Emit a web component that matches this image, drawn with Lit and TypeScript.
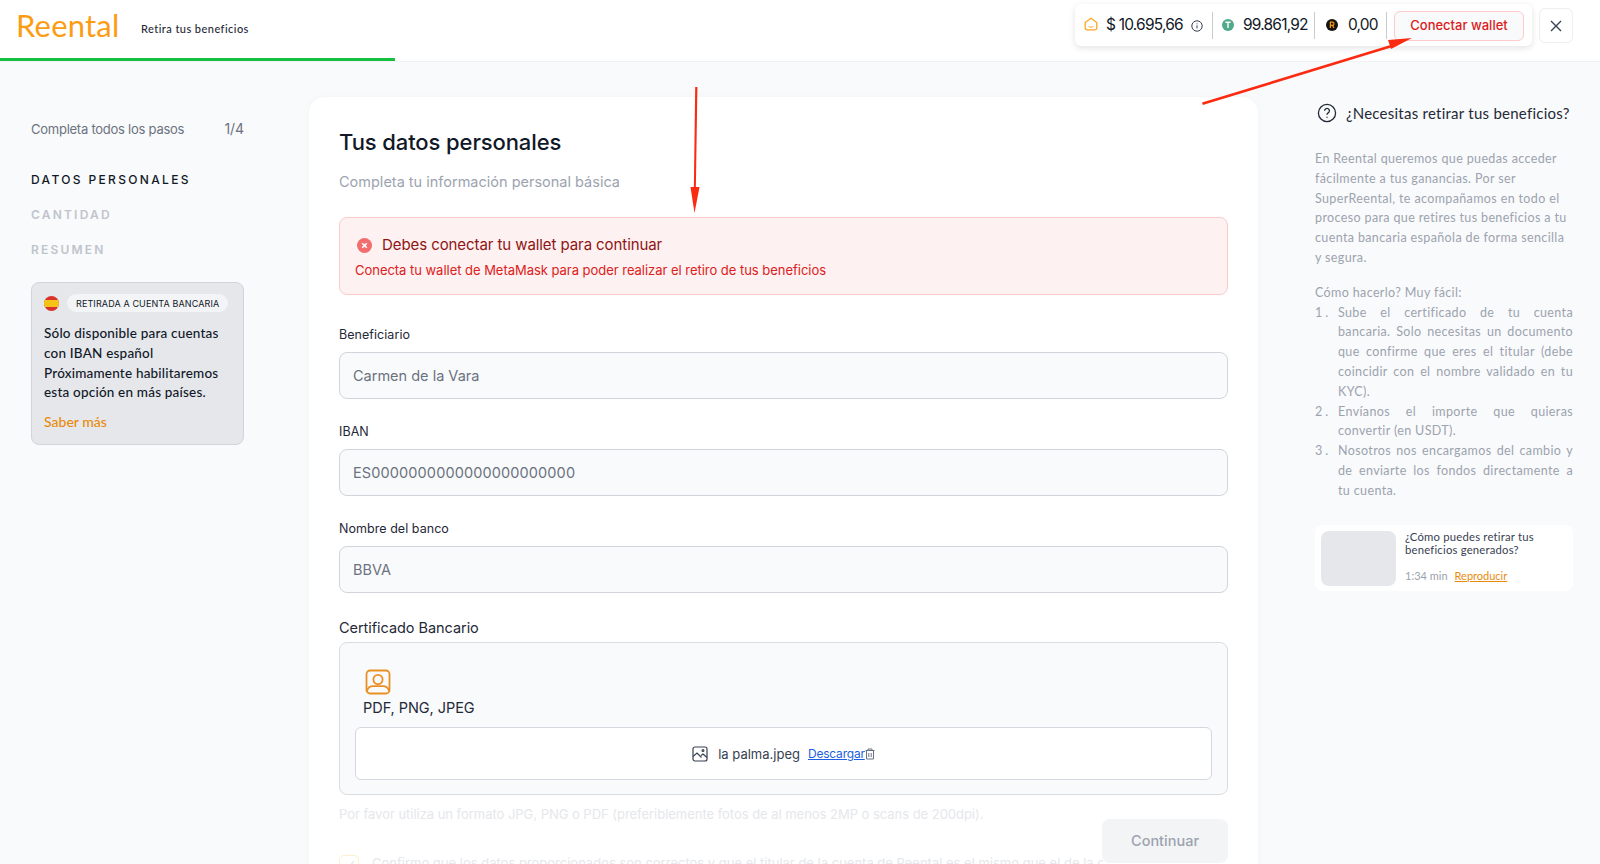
import { LitElement, html, css } from "lit";
import { customElement } from "lit/decorators.js";

@customElement("app-root")
export class AppRoot extends LitElement {
  static styles = css`
    :host { display: block; position: relative; width: 1600px; height: 864px; overflow: hidden; background: #f9fafb; font-family: Inter, "Liberation Sans", sans-serif; color: #111827; }
    * { box-sizing: border-box; }
    header { position: relative; height: 62px; background: #fff; border-bottom: 1px solid #f0f1f3; display: flex; align-items: flex-start; padding: 0 27px 0 16px; }
    .logo { font-family: Lato, sans-serif; font-size: 31px; font-weight: 400; color: #fb9d14; line-height: 36px; margin-top: 7px; width: 125px; letter-spacing: 0.2px; }
    .sub { font-family: Lato, sans-serif; font-size: 11px; font-weight: 500; color: #1f2937; letter-spacing: 0.45px; margin-top: 22px; line-height: 14px; }
    .progress { position: absolute; left: 0; bottom: 0; width: 395px; height: 3px; background: #16bf3f; }
    .spacer { flex: 1; }
    .wallet { display: flex; align-items: center; height: 42px; width: 457px; margin-top: 4px; padding: 0 8px 0 9px; background: #fff; border-radius: 6px; box-shadow: 0 2px 6px rgba(17,24,39,.12); font-size: 15.5px; letter-spacing: -0.8px; white-space: nowrap; }
    .seg { display: flex; align-items: center; height: 27px; }
    .seg span { padding-bottom: 2px; }
    .seg.a { width: 129px; border-right: 1px solid #c9ccd1; gap: 8px; }
    .seg.a .house { margin-bottom: 2px; }
    .seg.a .inf { margin-top: 2px; }
    .seg.b { width: 102px; border-right: 1px solid #c9ccd1; padding-left: 9px; gap: 9px; }
    .seg.c { width: 72px; border-right: 1px solid #c9ccd1; padding-left: 11px; gap: 10px; }
    .seg svg { flex: none; }
    .conn { margin-left: 7px; margin-top: 2px; width: 130px; height: 30px; border: 1px solid #fecaca; border-radius: 6px; background: #f9fafb; color: #d91c1c; font-size: 13px; font-weight: 500; letter-spacing: 0; display: flex; align-items: center; justify-content: center; padding-bottom: 2px; }
    .close { width: 34px; height: 35px; margin-top: 8px; margin-left: 7px; border: 1px solid #eceef1; border-radius: 6px; display: flex; align-items: center; justify-content: center; background: #fff; }
    main { display: grid; grid-template-columns: 213px 949px 258px; column-gap: 65px; padding: 35px 0 0 31px; }
    main > .right { margin-left: -8px; width: 258px; }
    .prog { display: flex; justify-content: space-between; font-size: 13px; letter-spacing: -0.25px; color: #6b7280; margin-top: 23px; line-height: 18px; }
    .prog span + span { font-size: 14px; letter-spacing: -0.1px; }
    .step { font-size: 12px; letter-spacing: 2.2px; font-weight: 600; color: #bfc4cc; line-height: 16px; margin-top: 19px; }
    .step.on { color: #111827; font-weight: 500; margin-top: 34px; letter-spacing: 2.35px; }
    .info { margin-top: 24px; height: 163px; background: #e5e7eb; border: 1px solid #d1d5db; border-radius: 8px; padding: 11px 12px; }
    .tagrow { display: flex; align-items: center; gap: 8px; }
    .tag { font-size: 9px; font-weight: 400; background: #f3f4f6; border-radius: 9px; height: 18px; padding: 0 9px; display: flex; align-items: center; white-space: nowrap; letter-spacing: 0.12px; color: #111827; }
    .info p { margin: 12px 0 0; font-family: Lato, sans-serif; font-size: 13.5px; line-height: 19.8px; color: #111827; font-weight: 500; letter-spacing: 0.2px; white-space: nowrap; }
    .info a { display: block; margin-top: 10px; font-family: Lato, sans-serif; font-size: 14px; color: #ea8a0c; font-weight: 500; line-height: 18px; }
    .card { background: #fff; border-radius: 16px 16px 0 0; padding: 0 30px; height: 800px; box-shadow: 0 0 8px rgba(17,24,39,.03); }
    h1 { margin: 30px 0 0; font-size: 22px; font-weight: 500; line-height: 30px; letter-spacing: -0.1px; color: #111827; }
    .lead { margin: 15px 0 0; font-size: 14.5px; color: #9ca3af; line-height: 20px; letter-spacing: 0; }
    .alert { margin-top: 25px; height: 78px; background: #fef1f1; border: 1px solid #fecaca; border-radius: 8px; padding: 17px 15px; }
    .at { display: flex; align-items: center; gap: 10px; font-size: 15px; line-height: 20px; color: #8f1414; padding-left: 2px; letter-spacing: -0.08px; }
    .ad { font-size: 13px; color: #dc2020; line-height: 18px; margin-top: 6px; letter-spacing: -0.03px; }
    label { display: block; font-size: 12.5px; line-height: 16px; color: #1f2937; margin-top: 25px; margin-bottom: 9px; letter-spacing: 0.05px; }
    label.first { margin-top: 32px; margin-bottom: 9px; }
    .input { height: 47px; background: #f9fafb; border: 1px solid #d1d5db; border-radius: 8px; display: flex; align-items: center; padding: 0 13px 1px; font-size: 14.5px; color: #6b7280; letter-spacing: 0; }
    .input.num { letter-spacing: 0.12px; }
    .certl { font-size: 14.5px; line-height: 20px; color: #1f2937; margin-top: 25px; letter-spacing: -0.05px; }
    .box { margin-top: 4px; height: 153px; background: #f9fafb; border: 1px solid #d9dce1; border-radius: 8px; padding: 26px 15px 0; }
    .box svg.u { display: block; margin-left: 10px; }
    .fmt { font-size: 14.5px; line-height: 20px; margin: 3px 0 0 8px; color: #1f2937; letter-spacing: -0.05px; }
    .file { margin-top: 9px; height: 53px; background: #fff; border: 1px solid #d5d8de; border-radius: 6px; display: flex; align-items: center; justify-content: center; font-size: 13px; color: #374151; }
    .file svg.i { margin-right: 10px; }
    .file a { margin-left: 8px; font-size: 12px; color: #1d5fe0; text-decoration: underline; letter-spacing: -0.2px; }
    .hint { margin-top: 11px; font-size: 13px; line-height: 16px; color: #e5e7eb; letter-spacing: -0.03px; }
    .foot { position: relative; height: 60px; }
    .btn { position: absolute; right: 0; top: -3px; width: 126px; height: 44px; padding-bottom: 2px; background: #f3f4f6; border-radius: 8px; display: flex; align-items: center; justify-content: center; color: #9ca3af; font-size: 14.5px; font-weight: 500; }
    .check { position: absolute; left: 0; top: 33px; display: flex; gap: 13px; align-items: flex-start; font-size: 13px; color: #e5e7eb; white-space: nowrap; width: 764px; overflow: hidden; line-height: 16px; }
    .cb { flex: none; width: 20px; height: 20px; border: 1px solid #fdf0cf; border-radius: 5px; display: flex; align-items: center; justify-content: center; }
    .rh { display: flex; align-items: center; gap: 9px; margin-top: 6px; font-family: Lato, sans-serif; font-size: 15px; line-height: 20px; color: #1f2937; letter-spacing: .25px; padding-left: 2px; }
    .rtext { font-family: Lato, sans-serif; font-size: 12.5px; color: #9ca3af; line-height: 19.8px; letter-spacing: 0.37px; }
    .rtext p { margin: 0; }
    .rtext p.p1 { margin-top: 26px; }
    .rtext p.p2 { margin-top: 15px; }
    ol { list-style: none; margin: 0; padding: 0; }
    li { display: flex; }
    li b { font-weight: 400; width: 23px; flex: none; letter-spacing: 3px; }
    li span { text-align: justify; }
    .video { margin-top: 24px; width: 258px; height: 66px; background: #fff; border-radius: 8px; padding: 6px; display: flex; gap: 9px; }
    .thumb { width: 75px; height: 55px; background: #e5e7eb; border-radius: 8px; flex: none; }
    .vt { font-family: Lato, sans-serif; font-size: 11.3px; line-height: 13px; color: #374151; letter-spacing: .2px; margin-top: -1px; }
    .vm { font-family: Lato, sans-serif; font-size: 11px; color: #9ca3af; margin-top: 13px; display: flex; gap: 7px; line-height: 13px; }
    .vm a { color: #ea8a0c; text-decoration: underline; }
    .arrows { position: absolute; inset: 0; width: 1600px; height: 864px; pointer-events: none; }
  `;

  render() {
    return html`
      <header>
        <div class="logo">Reental</div>
        <div class="sub">Retira tus beneficios</div>
        <div class="spacer"></div>
        <div class="wallet">
          <div class="seg a">
            <svg class="house" width="14" height="14" viewBox="0 0 14 14" fill="none" stroke="#fba61f" stroke-width="1.3"><path d="M1.2 5.6 7 1.2l5.8 4.4V11a1.8 1.8 0 0 1-1.8 1.8H3A1.8 1.8 0 0 1 1.2 11z"/><path d="M4.6 9.4c1.4 1 3.4 1 4.8 0" stroke-width="1"/></svg>
            <span>$ 10.695,66</span>
            <svg class="inf" width="12" height="12" viewBox="0 0 12 12" fill="none" stroke="#374151" stroke-width="1"><circle cx="6" cy="6" r="5.2"/><path d="M6 5.4v3M6 3.4v.9"/></svg>
          </div>
          <div class="seg b">
            <svg width="12" height="12" viewBox="0 0 12 12"><circle cx="6" cy="6" r="6" fill="#4fa98a"/><path d="M3.4 3.3h5.2M6 3.3V9" stroke="#fff" stroke-width="1.4" fill="none"/></svg>
            <span>99.861,92</span>
          </div>
          <div class="seg c">
            <svg width="12" height="12" viewBox="0 0 12 12"><circle cx="6" cy="6" r="6" fill="#161310"/><path d="M4.4 9V3.2h2a1.6 1.6 0 0 1 0 3.2h-2M6.4 6.4 8 9" stroke="#f59e0b" stroke-width="1.2" fill="none"/></svg>
            <span>0,00</span>
          </div>
          <div class="conn">Conectar wallet</div>
        </div>
        <div class="close">
          <svg width="12" height="12" viewBox="0 0 12 12" stroke="#374151" stroke-width="1.4" fill="none"><path d="M1 1l10 10M11 1 1 11"/></svg>
        </div>
        <div class="progress"></div>
      </header>
      <main>
        <aside>
          <div class="prog"><span>Completa todos los pasos</span><span>1/4</span></div>
          <div class="step on">DATOS PERSONALES</div>
          <div class="step">CANTIDAD</div>
          <div class="step">RESUMEN</div>
          <div class="info">
            <div class="tagrow">
              <svg width="15" height="15" viewBox="0 0 15 15"><defs><clipPath id="f"><circle cx="7.5" cy="7.5" r="7.5"/></clipPath></defs><g clip-path="url(#f)"><rect width="15" height="15" fill="#d9322b"/><rect y="4" width="15" height="7" fill="#f6c416"/></g></svg>
              <div class="tag">RETIRADA A CUENTA BANCARIA</div>
            </div>
            <p>Sólo disponible para cuentas<br />con IBAN español<br />Próximamente habilitaremos<br />esta opción en más países.</p>
            <a>Saber más</a>
          </div>
        </aside>
        <section class="card">
          <h1>Tus datos personales</h1>
          <p class="lead">Completa tu información personal básica</p>
          <div class="alert">
            <div class="at">
              <svg width="15" height="15" viewBox="0 0 15 15"><circle cx="7.5" cy="7.5" r="7.5" fill="#f26d6d"/><path d="M5.2 5.2l4.6 4.6M9.8 5.2l-4.6 4.6" stroke="#fff" stroke-width="1.6"/></svg>
              <span>Debes conectar tu wallet para continuar</span>
            </div>
            <div class="ad">Conecta tu wallet de MetaMask para poder realizar el retiro de tus beneficios</div>
          </div>
          <label class="first">Beneficiario</label>
          <div class="input">Carmen de la Vara</div>
          <label>IBAN</label>
          <div class="input num">ES0000000000000000000000</div>
          <label>Nombre del banco</label>
          <div class="input">BBVA</div>
          <div class="certl">Certificado Bancario</div>
          <div class="box">
            <svg class="u" width="26" height="26" viewBox="0 0 26 26" fill="none" stroke="#ea8f23" stroke-width="1.8"><rect x="1.5" y="1.5" width="23" height="23" rx="3.5"/><circle cx="13" cy="10.5" r="4.6"/><path d="M2 22c1-3.4 3-4.8 6-4.8h10c3 0 5 1.4 6 4.8"/></svg>
            <div class="fmt">PDF, PNG, JPEG</div>
            <div class="file">
              <svg class="i" width="16" height="16" viewBox="0 0 16 16" fill="none" stroke="#374151" stroke-width="1.2"><rect x="1" y="1" width="14" height="14" rx="2"/><path d="M1 10.5l4-3.5 4.5 4.5M9 9.5l2-1.5 4 3.5"/><circle cx="11" cy="4.6" r=".9"/></svg>
              <span>la palma.jpeg</span>
              <a>Descargar</a>
              <svg width="10" height="12" viewBox="0 0 10 12" fill="none" stroke="#6b7280" stroke-width="1"><path d="M.5 2.5h9M3 2.5V1h4v1.5M1.5 2.5v8.5h7V2.5M3.8 5v4M6.2 5v4"/></svg>
            </div>
          </div>
          <div class="hint">Por favor utiliza un formato JPG, PNG o PDF (preferiblemente fotos de al menos 2MP o scans de 200dpi).</div>
          <div class="foot">
            <div class="check">
              <div class="cb"><svg width="12" height="10" viewBox="0 0 12 10" fill="none" stroke="#e5e7eb" stroke-width="1.3"><path d="M1 5l3.5 3.5L11 1"/></svg></div>
              <span>Confirmo que los datos proporcionados son correctos y que el titular de la cuenta de Reental es el mismo que el de la cuenta bancaria</span>
            </div>
            <div class="btn">Continuar</div>
          </div>
        </section>
        <aside class="right">
          <div class="rh">
            <svg width="20" height="20" viewBox="0 0 20 20" fill="none" stroke="#1f2937" stroke-width="1.3"><circle cx="10" cy="10" r="8.6"/><path d="M7.6 7.8a2.4 2.4 0 1 1 3.6 2.1c-.8.5-1.2.9-1.2 1.8M10 13.8v.9"/></svg>
            <span>¿Necesitas retirar tus beneficios?</span>
          </div>
          <div class="rtext">
            <p class="p1">En Reental queremos que puedas acceder fácilmente a tus ganancias. Por ser SuperReental, te acompañamos en todo el proceso para que retires tus beneficios a tu cuenta bancaria española de forma sencilla y segura.</p>
            <p class="p2">Cómo hacerlo? Muy fácil:</p>
            <ol>
              <li><b>1.</b><span>Sube el certificado de tu cuenta bancaria. Solo necesitas un documento que confirme que eres el titular (debe coincidir con el nombre validado en tu KYC).</span></li>
              <li><b>2.</b><span>Envíanos el importe que quieras convertir (en USDT).</span></li>
              <li><b>3.</b><span>Nosotros nos encargamos del cambio y de enviarte los fondos directamente a tu cuenta.</span></li>
            </ol>
          </div>
          <div class="video">
            <div class="thumb"></div>
            <div>
              <div class="vt">¿Cómo puedes retirar tus beneficios generados?</div>
              <div class="vm"><span>1:34 min</span><a>Reproducir</a></div>
            </div>
          </div>
        </aside>
      </main>
      <svg class="arrows" viewBox="0 0 1600 864" fill="#fb2b12" stroke="none">
        <path d="M697.4 87 L695.8 192 L693.8 192 L695.2 87 Z"/>
        <path d="M690.5 187 L699.5 187 L694.5 213 Z"/>
        <path d="M1202 102.6 L1392 44.6 L1392.8 47 L1202.8 105 Z"/>
        <path d="M1388 40 L1412 38 L1391 49 Z"/>
      </svg>
    `;
  }
}
